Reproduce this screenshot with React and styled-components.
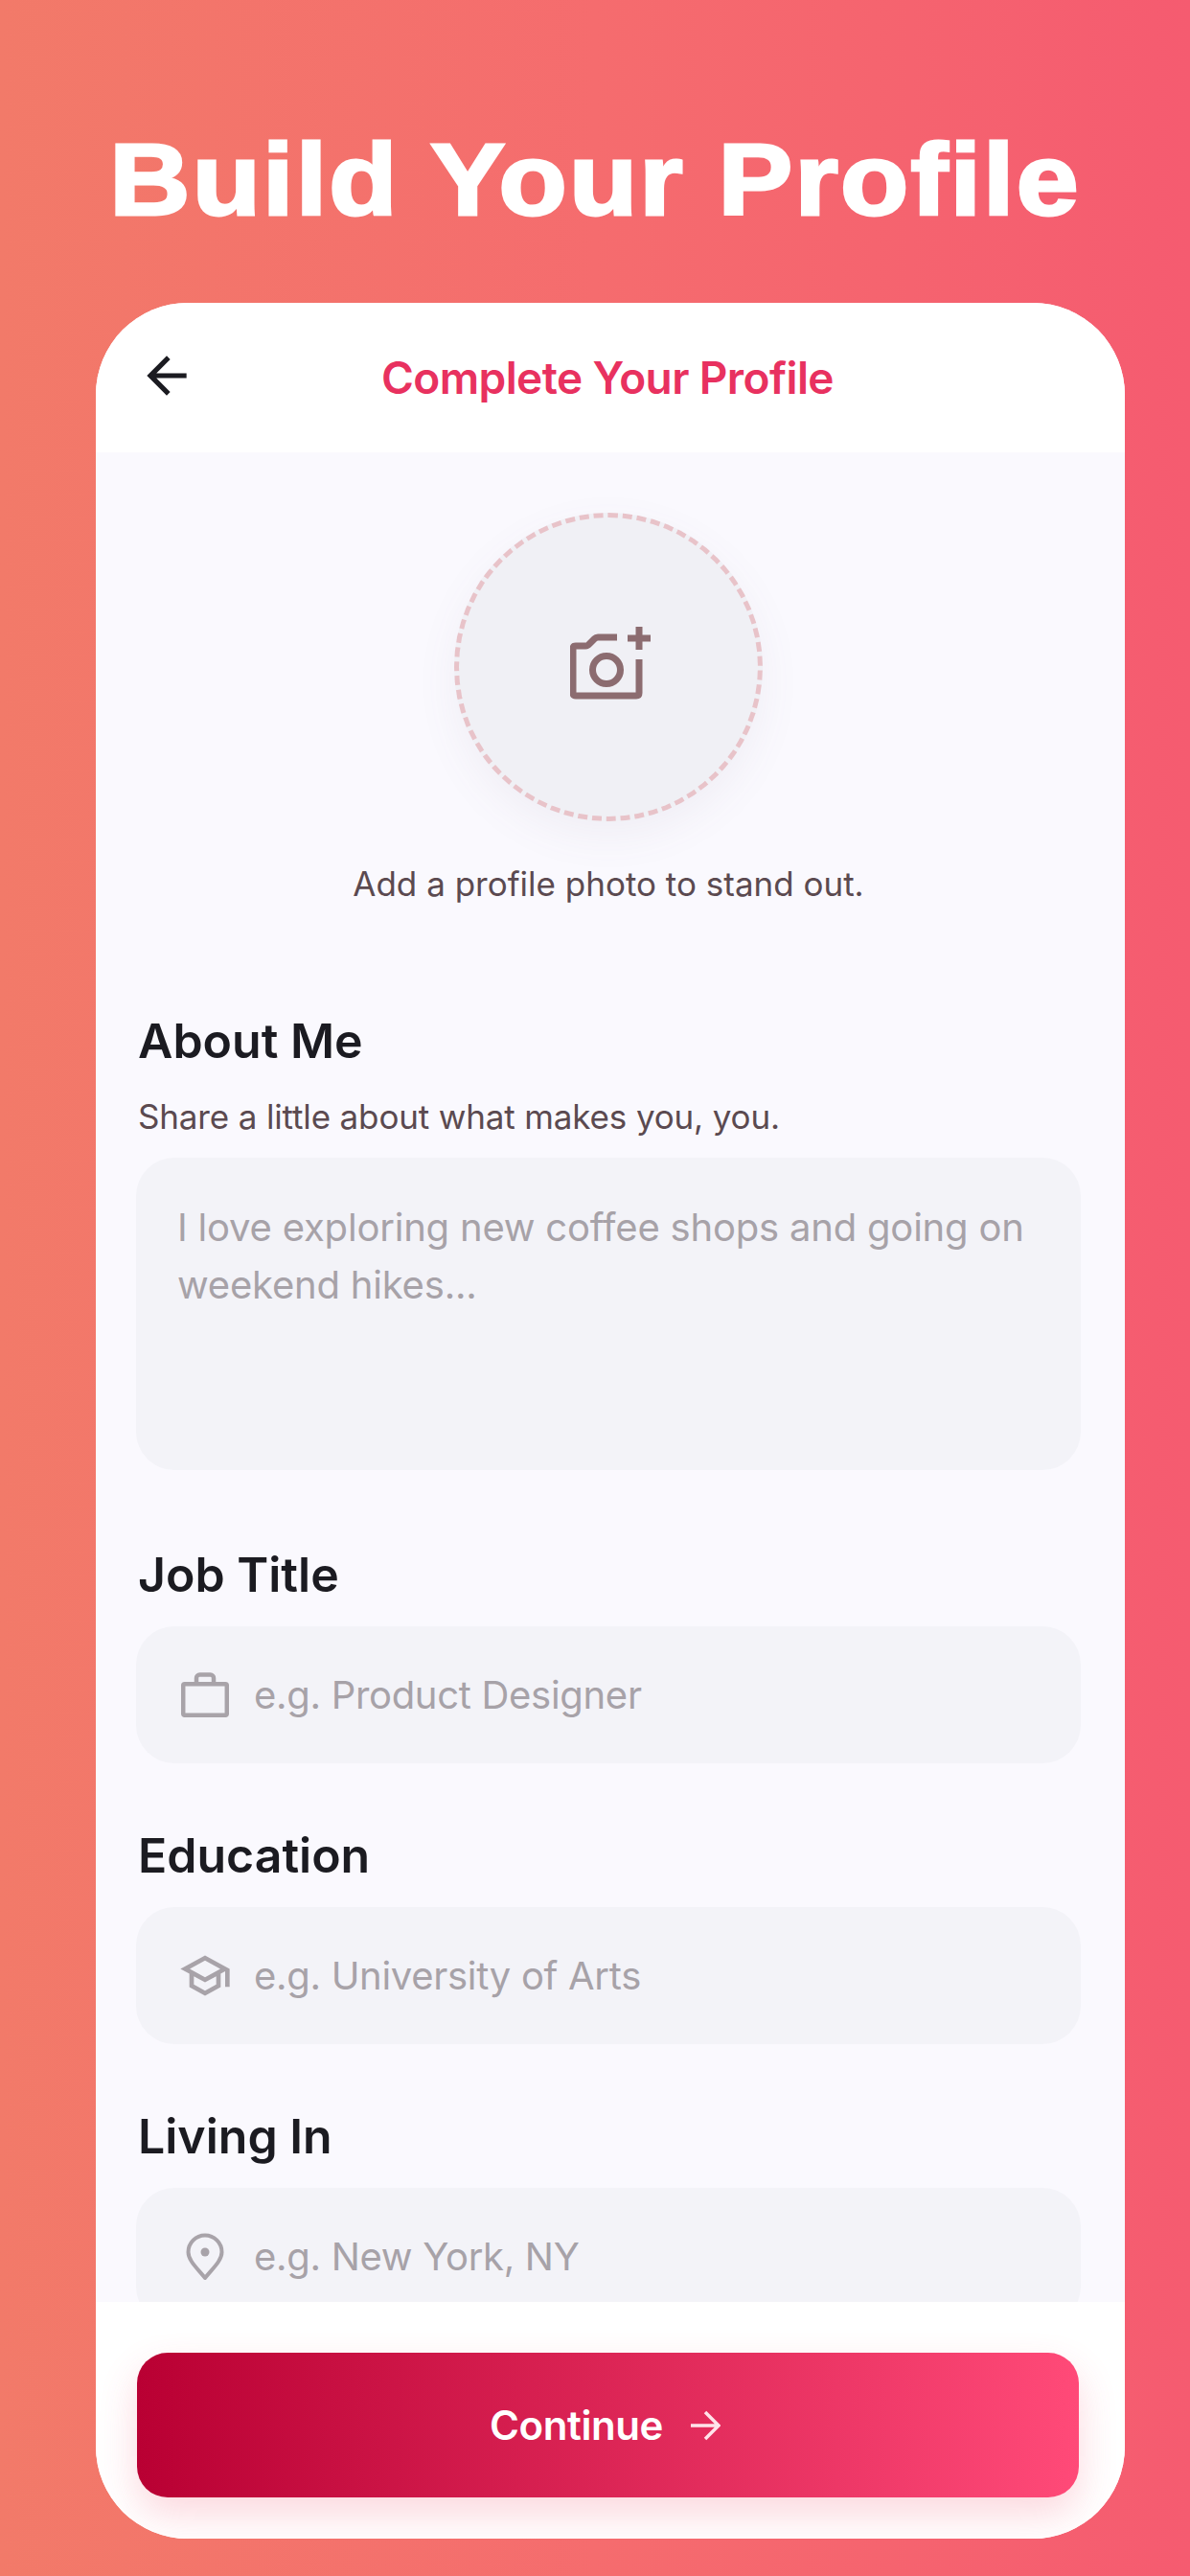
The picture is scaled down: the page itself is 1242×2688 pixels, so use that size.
import React from 'react'
import styled, { createGlobalStyle } from 'styled-components'

const GlobalStyle = createGlobalStyle`
  html, body { margin: 0; padding: 0; }
  body { font-family: Inter, "Noto Sans", sans-serif; }
`

const Page = styled.div`
  width: 1242px;
  height: 2688px;
  display: flex;
  flex-direction: column;
  overflow: hidden;
  background: linear-gradient(90deg, #f27a69 0%, #f56c6e 50%, #f55b70 100%);
`

const Headline = styled.h1`
  height: 316px;
  margin: 0;
  padding: 126px 0 0 0;
  box-sizing: border-box;
  color: #fff;
  font: 700 106px/122px "Liberation Sans", Arial, sans-serif;
  text-align: center;
  letter-spacing: 2px;
  -webkit-text-stroke: 3px #fff;
  transform: scaleX(1.1);
`

const Card = styled.main`
  width: 1074px;
  height: 2333px;
  margin-left: 100px;
  display: flex;
  flex-direction: column;
  overflow: hidden;
  border-radius: 96px;
  background: #faf9fe;
`

const Header = styled.header`
  height: 156px;
  flex: none;
  display: flex;
  align-items: center;
  justify-content: center;
  position: relative;
  padding: 0 47px 0 41px;
  box-sizing: border-box;
  background: #fff;
`

const BackIcon = styled.svg`
  position: absolute;
  left: 43px;
  top: 45px;
  width: 62px;
  height: 62px;
`

const HeaderTitle = styled.div`
  color: #e8315f;
  font-size: 46px;
  font-weight: 600;
  letter-spacing: -0.6px;
  line-height: 60px;
`

const Body = styled.div`
  flex: 1;
  min-height: 0;
  overflow: hidden;
  padding: 63px 46px 0 42px;
  display: flex;
  flex-direction: column;
`

const PhotoCircle = styled.div`
  width: 322px;
  height: 322px;
  flex: none;
  align-self: center;
  display: flex;
  align-items: center;
  justify-content: center;
  box-sizing: border-box;
  border-radius: 50%;
  border: 5px dashed #e8c3c9;
  background: #f0f0f5;
  box-shadow: 0 16px 44px rgba(120, 100, 130, 0.07);
`

const CameraIcon = styled.svg`
  width: 84px;
  height: 76px;
  margin: 0 0 8px 4px;
`

const Helper = styled.div`
  margin: 35px 0 104px;
  color: #5b4a50;
  font-size: 35px;
  line-height: 60px;
  text-align: center;
`

const Fields = styled.div`
  display: flex;
  flex-direction: column;
  gap: 66px;
`

const Field = styled.section`
  display: flex;
  flex-direction: column;
  margin-bottom: ${(p) => p.$extra || 0}px;
`

const Label = styled.div`
  height: 60px;
  margin-bottom: ${(p) => p.$gap}px;
  padding-left: 2px;
  color: #1b1b21;
  font-size: 50px;
  font-weight: 600;
  line-height: 60px;
`

const Sub = styled.div`
  height: 58px;
  margin: 20px 0 14px;
  padding-left: 2px;
  color: #5b4a50;
  font-size: 35px;
  line-height: 58px;
  letter-spacing: -0.15px;
`

const TextArea = styled.div`
  height: 326px;
  box-sizing: border-box;
  padding: 43px 30px 0 43px;
  border-radius: 40px;
  background: #f3f3f8;
  color: #a7a2a8;
  font-size: 40px;
  line-height: 60px;
  letter-spacing: -0.2px;
`

const InputRow = styled.div`
  height: 143px;
  flex: none;
  display: flex;
  align-items: center;
  gap: 23px;
  padding-left: 44px;
  border-radius: 40px;
  background: #f3f3f8;
  color: #a7a2a8;
  font-size: 40px;
  letter-spacing: -0.3px;
`

const IconSlot = styled.span`
  width: 56px;
  flex: none;
  display: flex;
  align-items: center;
  justify-content: center;
`

const Footer = styled.footer`
  height: 247px;
  flex: none;
  padding: 53px 48px 0 43px;
  box-sizing: border-box;
  background: #fff;
`

const ContinueButton = styled.button`
  width: 100%;
  height: 151px;
  display: flex;
  align-items: center;
  justify-content: center;
  gap: 28px;
  padding: 0 6px 0 0;
  border: 0;
  border-radius: 32px;
  background: linear-gradient(90deg, #b90033 0%, #ff4a78 100%);
  box-shadow: 0 18px 40px rgba(240, 60, 90, 0.2);
  color: #fff;
  font-family: inherit;
  font-size: 42px;
  font-weight: 600;
  letter-spacing: -0.4px;
`

const BriefcaseIcon = () => (
  <svg width="50" height="47" viewBox="0 0 50 47" fill="none" stroke="#a8a3a9" strokeWidth="4.5" strokeLinejoin="round">
    <rect x="2.2" y="12.2" width="45.6" height="32.6" rx="1.5" />
    <path d="M16 12V6a3.5 3.5 0 0 1 3.5-3.5h11A3.5 3.5 0 0 1 34 6v6" />
  </svg>
)

const SchoolIcon = () => (
  <svg width="59" height="59" viewBox="0 0 24 24" fill="#a8a3a9">
    <path d="M12 3 1 9l4 2.18v6L12 21l7-3.82v-6l2-1.09V17h2V9L12 3zm6.82 6L12 12.72 5.18 9 12 5.28 18.82 9zM17 15.99l-5 2.73-5-2.73v-3.72L12 15l5-2.73v3.72z" />
  </svg>
)

const PinIcon = () => (
  <svg width="40" height="50" viewBox="0 0 40 50" fill="none" stroke="#a8a3a9" strokeWidth="4">
    <path d="M20 47C12 37 2.5 29 2.5 20a17.5 17.5 0 0 1 35 0C37.5 29 28 37 20 47Z" strokeLinejoin="round" />
    <circle cx="20" cy="20" r="4.5" fill="#a8a3a9" stroke="none" />
  </svg>
)

const inputs = [
  { label: 'Job Title', hint: 'e.g. Product Designer', icon: <BriefcaseIcon /> },
  { label: 'Education', hint: 'e.g. University of Arts', icon: <SchoolIcon /> },
  { label: 'Living In', hint: 'e.g. New York, NY', icon: <PinIcon /> },
]

export default function App() {
  return (
    <Page>
      <GlobalStyle />
      <Headline>Build Your Profile</Headline>
      <Card>
        <Header>
          <BackIcon viewBox="0 0 24 24" fill="#1b1b21">
            <path d="M20 11H7.83l5.59-5.59L12 4l-8 8 8 8 1.41-1.41L7.83 13H20v-2z" />
          </BackIcon>
          <HeaderTitle>Complete Your Profile</HeaderTitle>
        </Header>
        <Body>
          <PhotoCircle>
            <CameraIcon viewBox="0 0 84 76" fill="none" stroke="#8c6c70" strokeWidth="7">
              <path d="M49 11H29Q27 11 25.500 12.500L20 18Q18.500 20 16 20H6Q3 20 3 23V69Q3 72 6 72H69Q72 72 72 69V34" strokeLinejoin="round" />
              <circle cx="38" cy="45" r="14.500" />
              <path d="M72 0V24M60 12H84" />
            </CameraIcon>
          </PhotoCircle>
          <Helper>Add a profile photo to stand out.</Helper>
          <Fields>
            <Field $extra={13}>
              <Label $gap={0}>About Me</Label>
              <Sub>Share a little about what makes you, you.</Sub>
              <TextArea>I love exploring new coffee shops and going on weekend hikes...</TextArea>
            </Field>
            {inputs.map((f) => (
              <Field key={f.label}>
                <Label $gap={24}>{f.label}</Label>
                <InputRow>
                  <IconSlot>{f.icon}</IconSlot>
                  {f.hint}
                </InputRow>
              </Field>
            ))}
          </Fields>
        </Body>
        <Footer>
          <ContinueButton>
            Continue
            <svg width="32" height="32" viewBox="0 0 32 32" fill="none" stroke="#ffe3ea" strokeWidth="3.5">
              <path d="M1 16H30M16 2L30 16L16 30" />
            </svg>
          </ContinueButton>
        </Footer>
      </Card>
    </Page>
  )
}
